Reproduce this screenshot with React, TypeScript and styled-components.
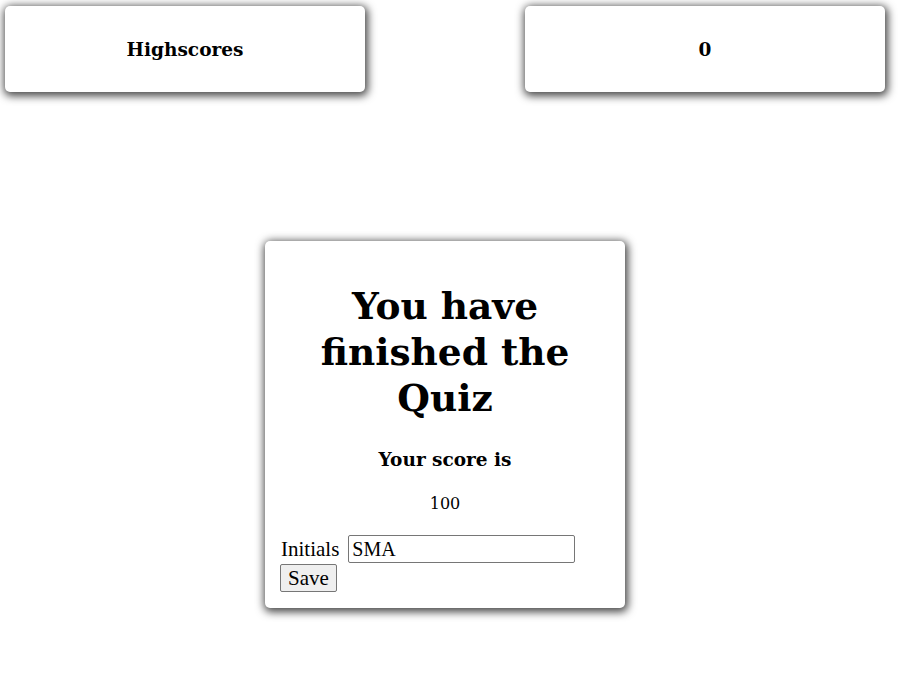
import React from "react";
import styled, { createGlobalStyle } from "styled-components";

const GlobalStyle = createGlobalStyle`
  html, body {
    margin: 0;
    padding: 0;
    background: #ffffff;
  }
  body {
    font-family: "DejaVu Serif", "Liberation Serif", serif;
    color: #000;
  }
`;

const Page = styled.div`
  width: 880px;
  padding: 6px 0 24px 5px;
  display: flex;
  flex-direction: column;
  align-items: center;
`;

const TopBar = styled.header`
  width: 100%;
  display: flex;
  justify-content: space-between;
`;

const Card = styled.div`
  background: #fff;
  border-radius: 5px;
  box-shadow: 1px 2px 8px 2px rgba(0, 0, 0, 0.72);
`;

const TopCard = styled(Card)`
  width: 360px;
  height: 86px;
  display: flex;
  align-items: center;
  justify-content: center;
  font-family: "DejaVu Serif", serif;
  font-weight: bold;
  font-size: 18.5px;
`;

const QuizCard = styled(Card)`
  margin-top: 149px;
  width: 360px;
  box-sizing: border-box;
  padding: 42px 15px 16px;
  display: flex;
  flex-direction: column;
  align-items: stretch;
`;

const Title = styled.h1`
  margin: 0;
  text-align: center;
  font-family: "DejaVu Serif", serif;
  font-weight: bold;
  font-size: 37.5px;
  line-height: 46px;
`;

const Subtitle = styled.h2`
  margin: 27px 0 0;
  text-align: center;
  font-family: "DejaVu Serif", serif;
  font-weight: bold;
  font-size: 18.5px;
  line-height: 24px;
`;

const Score = styled.p`
  margin: 21px 0 0;
  text-align: center;
  font-family: "DejaVu Serif", serif;
  font-size: 16px;
  line-height: 22px;
`;

const Form = styled.form`
  margin-top: 20px;
  font-family: "Liberation Serif", serif;
  font-size: 21px;
  line-height: 28px;
`;

const Label = styled.label`
  display: inline;
  padding-left: 1px;
`;

const Input = styled.input`
  font-family: "Liberation Serif", serif;
  font-size: 20px;
  width: 227px;
  height: 28px;
  box-sizing: border-box;
  padding: 1px 3px;
  margin: 0 0 0 9px;
  border: 1px solid #767676;
  border-radius: 2px;
  vertical-align: top;
`;

const Button = styled.button`
  display: block;
  font-family: "Liberation Serif", serif;
  font-size: 21px;
  height: 28px;
  padding: 0 7px;
  margin: 1px 0 0;
  background: #efefef;
  border: 1px solid #767676;
  border-radius: 2px;
  line-height: 24px;
`;

export default function App() {
  return (
    <>
      <GlobalStyle />
      <Page>
        <TopBar>
          <TopCard>Highscores</TopCard>
          <TopCard>0</TopCard>
        </TopBar>
        <QuizCard>
          <Title>
            You have
            <br />
            finished the
            <br />
            Quiz
          </Title>
          <Subtitle>Your score is</Subtitle>
          <Score>100</Score>
          <Form onSubmit={(e) => e.preventDefault()}>
            <Label htmlFor="initials">Initials</Label>
            <Input id="initials" type="text" defaultValue="SMA" />
            <Button type="submit">Save</Button>
          </Form>
        </QuizCard>
      </Page>
    </>
  );
}
